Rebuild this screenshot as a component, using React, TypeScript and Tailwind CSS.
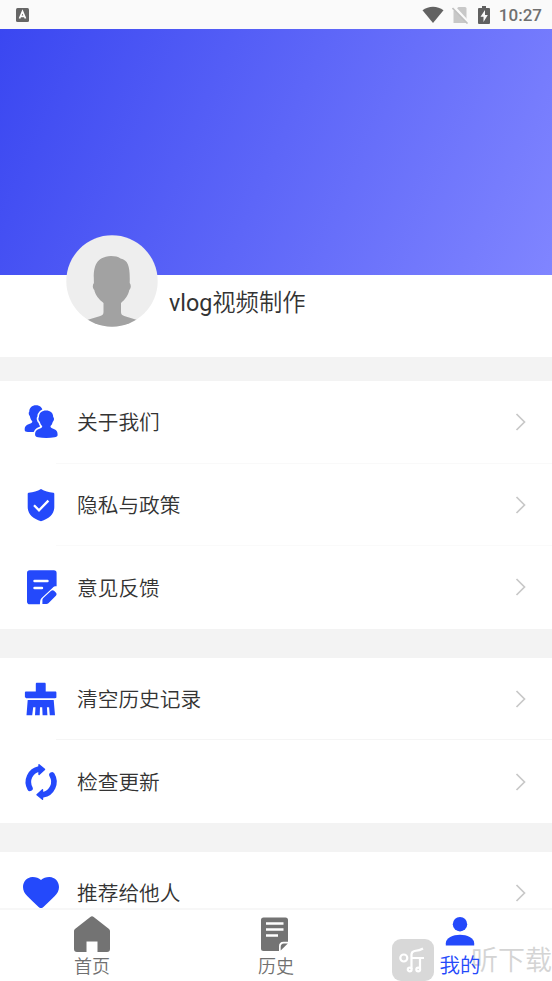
import type { ReactNode } from "react";

interface MenuItem {
  label: string;
  icon: ReactNode;
  divider?: string;
}

const BLUE = "#2449fb";

const FriendsIcon = () => (
  <svg viewBox="0 0 36 36" className="h-9 w-9" fill={BLUE}>
    <path d="M6.300 7.500c0-3.800 2.700-6.300 6.700-6.300s6.700 2.500 6.700 6.300c1 1 .9 3-.3 4.200-.5 2-1.300 3.500-2.500 4.800V28H6.500c-2.300 0-4-.3-4.600-1-.7-4 .8-5.800 4.200-7 2-.7 3.300-1.400 3.200-2.800-1.400-1.300-2-3-2.500-5.200C5.600 10.900 5.300 8.700 6.300 7.500z" />
    <path
      d="M16 13c0-4.200 2.900-6.500 7.100-6.500s7.100 2.300 7.100 6.500c1.300 1.100 1 3.800-.5 4.900-.5 1.900-1.100 3.100-2.200 4.200 0 1.400.5 1.800 2.100 2.300 3.500 1.100 5.200 2.500 5 6.600-.1 1.400-1.200 1.900-3 2.300-5 .9-11.700.9-16.500 0-1.800-.4-2.900-1-3-2.300-.2-4.100 1.500-5.500 5-6.600 1.600-.5 2.100-.9 2.100-2.300-1.200-1.200-1.800-2.300-2.300-4.200-1.500-1.100-2-3.800-.9-4.900z"
      stroke="#fff"
      strokeWidth="3.400"
      paintOrder="stroke"
    />
  </svg>
);

const ShieldIcon = () => (
  <svg viewBox="0 0 36 36" className="h-9 w-9">
    <path
      d="M18 2c3.800 2.300 7.600 3.400 12.300 3.700.7.100 1 .5 1 1.200V20c0 6.900-5.300 11.900-13.300 14.200C10 31.900 4.700 26.900 4.700 20V6.900c0-.7.300-1.100 1-1.200C10.400 5.400 14.200 4.300 18 2z"
      fill={BLUE}
    />
    <path d="M11 18.200l5 5.100 9.400-9.700" fill="none" stroke="#fff" strokeWidth="2.300" />
  </svg>
);

const FeedbackIcon = () => (
  <svg viewBox="0 0 36 36" className="h-9 w-9">
    <path
      d="M6.800 1.200h24A2.800 2.800 0 0 1 33.600 4v13.300c-1.500-.2-2.800.3-3.900 1.400L18.400 29.200c-.7.700-1 1.500-1.200 2.500l-.3 3.500H6.800A2.800 2.800 0 0 1 4 32.400V4a2.800 2.800 0 0 1 2.800-2.800z"
      fill={BLUE}
    />
    <path d="M11.500 12h13M11.500 19h7.500" stroke="#fff" strokeWidth="2.400" strokeLinecap="round" />
    <path
      d="M27.900 22c1-1 2.400-1 3.400-.1l1.500 1.500c1 1 1 2.400.1 3.400l-7.500 7.500c-.6.500-1.200.7-2 .7h-4v-4c0-.8.300-1.400.9-2z"
      fill={BLUE}
    />
  </svg>
);

const BrushIcon = () => (
  <svg viewBox="0 0 36 36" className="h-9 w-9" fill={BLUE}>
    <path d="M14 1.800h7.500c.8 0 1.200.4 1.200 1.200v7.400h9.400c.9 0 1.300.4 1.300 1.200V16c0 .8-.4 1.200-1.300 1.200H3.200c-.9 0-1.300-.4-1.300-1.200v-4.400c0-.8.400-1.200 1.300-1.200h9.600V3c0-.8.400-1.200 1.200-1.200z" />
    <path d="M4.700 19h26L32 34.200h-5.200l-.7-8h-2.200l.5 8h-4.800l-.4-8H17l-.3 8H12l.5-8h-2.300l-1 8H3.500z" />
  </svg>
);

const RefreshIcon = () => (
  <svg viewBox="0 0 36 36" className="h-9 w-9">
    <g fill="none" stroke={BLUE} strokeWidth="5.600" strokeLinecap="round">
      <path d="M7 24.300A13.200 13.200 0 0 1 16 5" />
      <path d="M29 11A13.200 13.200 0 0 1 20 30.800" />
    </g>
    <path
      d="M16 .8l5.500 4.600-5.500 5zM19.500 25.800l-5.500 5 5.500 4.400z"
      fill={BLUE}
      stroke={BLUE}
      strokeWidth="1.400"
      strokeLinejoin="round"
    />
  </svg>
);

const HeartIcon = () => (
  <svg viewBox="0 0 36 36" className="h-9 w-9">
    <path
      d="M18 4.900C20 2.900 23.500 1.800 26.600 1.900 32 2.100 36 6.500 36 12c0 3.700-1.700 6.400-4.200 9-3.600 3.700-7.600 7.500-11.400 11-1.800 1.700-3 1.700-4.800 0C11.800 28.500 7.800 24.700 4.200 21 1.700 18.400 0 15.700 0 12 0 6.500 4 2.100 9.400 1.900 12.500 1.800 16 2.900 18 4.900z"
      fill={BLUE}
    />
  </svg>
);

const ChevronIcon = () => (
  <svg viewBox="0 0 12 20" className="h-5 w-3" fill="none" stroke="#c8c8c8" strokeWidth="1.700">
    <path d="M1.500 2l8 8-8 8" />
  </svg>
);

const aboutItems: MenuItem[] = [
  { label: "关于我们", icon: <FriendsIcon />, divider: "border-[#f9f9f9]" },
  { label: "隐私与政策", icon: <ShieldIcon />, divider: "border-[#fafafa]" },
  { label: "意见反馈", icon: <FeedbackIcon /> },
];

const toolItems: MenuItem[] = [
  { label: "清空历史记录", icon: <BrushIcon />, divider: "border-[#f5f5f5]" },
  { label: "检查更新", icon: <RefreshIcon /> },
];

const shareItems: MenuItem[] = [{ label: "推荐给他人", icon: <HeartIcon /> }];

const MenuGroup = ({ items }: { items: MenuItem[] }) => (
  <div className="bg-white">
    {items.map((item) => (
      <div key={item.label} className="flex h-[82.600px] flex-col">
        <div className="flex flex-1 items-center pr-[25px] pl-[23px]">
          {item.icon}
          <span className="ml-[18px] flex-1 pt-[3px] text-[20.700px] leading-none font-[350]">{item.label}</span>
          <ChevronIcon />
        </div>
        {item.divider && <div className={`-mt-px ml-14 border-b ${item.divider}`} />}
      </div>
    ))}
  </div>
);

const StatusBar = () => (
  <div className="flex h-[29px] shrink-0 items-center bg-[#fafafa] pr-[10px] pl-4">
    <svg viewBox="0 0 13 14" className="h-[14px] w-[13px]">
      <rect width="13" height="14" rx="1.500" fill="#666" />
      <path d="M3.500 10.500l3-7 3 7M4.500 8.300h4" fill="none" stroke="#fff" strokeWidth="1.700" />
    </svg>
    <div className="ml-auto flex items-center">
      <svg viewBox="0 0 22 17" className="h-[17px] w-[22px]" fill="#626262">
        <path d="M.5 4.200C6.500-.5 15.500-.5 21.500 4.200L11 17z" />
      </svg>
      <svg viewBox="0 0 18 18" className="ml-2 h-[18px] w-[18px]">
        <path d="M6.500 1H13a1.500 1.500 0 0 1 1.500 1.500V17h-13V5z" fill="#c8c8c8" />
        <path d="M1 0l16 17.500" stroke="#fafafa" strokeWidth="3" />
        <path d="M.5 2l15 15.500" stroke="#c0c0c0" strokeWidth="1.700" />
      </svg>
      <svg viewBox="0 0 12 18" className="ml-2 h-[18px] w-3">
        <path d="M4 0h4v2h3a1 1 0 0 1 1 1v14a1 1 0 0 1-1 1H1a1 1 0 0 1-1-1V3a1 1 0 0 1 1-1h3z" fill="#606060" />
        <path d="M7 4L2.500 10.800h3V16L9.800 9H7z" fill="#fafafa" />
      </svg>
      <span className="ml-[9px] pt-[2px] font-['Roboto',sans-serif] text-[17px] leading-none font-medium text-[#707070]">
        10:27
      </span>
    </div>
  </div>
);

const Avatar = () => (
  <svg viewBox="0 0 92 92" className="h-[92px] w-[92px] shrink-0">
    <clipPath id="avatar">
      <circle cx="46" cy="46" r="45.700" />
    </clipPath>
    <g clipPath="url(#avatar)">
      <rect width="92" height="92" fill="#eee" />
      <path
        d="M28.300 55c-1.700-1.500-2.100-5-.4-7-.3-12-1-26 17.100-27 4 0 7 .7 9.500 2.500 8 1.500 9.700 9 9.200 24.500 1.700 2 1.300 5.500-.4 7-.8 4.500-4 9.500-8.300 13v9c0 2.500 1 3.300 4 4.300L76 86.500V93H16v-6.500l17.500-5.200c3-1 4-1.800 4-4.300v-9c-4.500-3.500-8.400-8.500-9.200-13z"
        fill="#a2a2a2"
      />
    </g>
  </svg>
);

const Watermark = () => (
  <div className="pointer-events-none absolute right-0 bottom-0 flex h-[42px] w-40 items-center justify-between">
    <div className="flex h-[42px] w-[42px] items-center justify-center rounded-[9px] bg-[#d8d8d8]">
      <svg viewBox="0 0 28 28" className="h-7 w-7" fill="none" stroke="#fff" strokeWidth="2.200">
        <circle cx="4.800" cy="12" r="3.500" />
        <path d="M12.500 23V8.500c0-2 1-3 3-3.500 4-.5 6-1 8.500-2.500M12.500 12H25M21 12v11" />
        <circle cx="10.700" cy="23.500" r="1.900" />
        <circle cx="19.200" cy="23.500" r="1.900" />
      </svg>
    </div>
    <span className="pt-[3px] text-[27px] leading-none font-[350] whitespace-nowrap text-[#d4d4d4]">听下载</span>
  </div>
);

const TabBar = () => (
  <div className="relative grid h-[73px] shrink-0 grid-cols-3 border-t-2 border-[#f7f7f7] bg-white text-[18px] font-[350] text-[#707070]">
    <Watermark />
    <div className="flex flex-col items-center pt-[6px]">
      <svg viewBox="0 0 36 36" className="h-9 w-9" fill="#737373">
        <path d="M16.300 1c1.200-.9 2.200-.9 3.400 0l15 11.700c.9.700 1.300 1.500 1.300 2.600V33c0 1.900-1 3-3 3h-9.500V25.500h-11V36H3c-2 0-3-1.100-3-3V15.300c0-1.100.4-1.900 1.300-2.600z" />
      </svg>
      <span className="mt-[6px] leading-none">首页</span>
    </div>
    <div className="flex flex-col items-center pt-[6px]">
      <svg viewBox="0 0 36 36" className="h-9 w-9">
        <path
          d="M5.500 1.500H27.500A2.500 2.500 0 0 1 30 4v21.700h-4.500c-3 0-4.500 1.500-4.500 4.500V35H5.500A2.500 2.500 0 0 1 3 32.500V4a2.500 2.500 0 0 1 2.500-2.500z"
          fill="#737373"
        />
        <path d="M22.700 34.500V31c0-2.300 1-3.500 3.300-3.500h3.800z" fill="#737373" />
        <path d="M8 7.500h17.500M8 13.500h17.500M8 19.500h12" stroke="#fff" strokeWidth="2.400" />
      </svg>
      <span className="mt-[6px] leading-none">历史</span>
    </div>
    <div className="relative flex flex-col items-center pt-[6px] text-[20.500px] text-[#2449fb]">
      <svg viewBox="0 0 36 36" className="h-9 w-9" fill={BLUE}>
        <circle cx="18" cy="8.200" r="7.200" />
        <path d="M3.800 29.500v-2.300C3.800 22 11 18.800 18 18.800S32.200 22 32.200 27.200v2.300z" />
      </svg>
      <span className="mt-1 leading-none">我的</span>
    </div>
  </div>
);

const App = () => {
  return (
    <div className="flex h-[981px] w-[552px] flex-col overflow-hidden bg-[#f3f3f3] font-['Roboto','Noto_Sans_CJK_SC',sans-serif] text-[#333]">
      <StatusBar />
      <div className="h-[246px] shrink-0 bg-linear-[114deg] from-[#3a47f1] to-[#8085ff]" />
      <div className="h-[82px] shrink-0 bg-white pl-[66px]">
        <div className="relative -top-10 flex items-center">
          <Avatar />
          <span className="mt-[45px] ml-[11px] text-[23.300px] leading-none">
            vlog<span className="font-[350]">视频制作</span>
          </span>
        </div>
      </div>
      <div className="flex min-h-0 flex-1 flex-col gap-[29px] overflow-hidden pt-6">
        <MenuGroup items={aboutItems} />
        <MenuGroup items={toolItems} />
        <MenuGroup items={shareItems} />
      </div>
      <TabBar />
    </div>
  );
};

export default App;
